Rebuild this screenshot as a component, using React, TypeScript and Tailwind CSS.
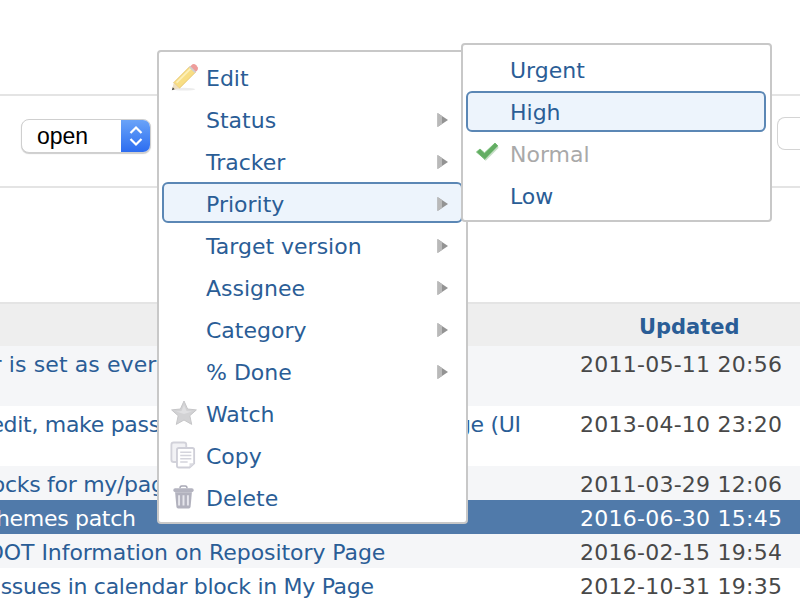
const font = "font-['DejaVu_Sans','Verdana',sans-serif]";

function PencilIcon() {
  return (
    <svg width="30" height="30" viewBox="0 0 32 32" className="blur-[0.4px]">
      <ellipse cx="15" cy="29" rx="12" ry="1.5" fill="#ececec" />
      <path d="M4 22 L21 5 L27 11 L10 28 Z" fill="#f8de84" stroke="#e8c468" strokeWidth="1" />
      <path d="M7 22 L22 7" stroke="#fcf0b8" strokeWidth="2" />
      <path d="M21 5 L24 2.5 Q26 1.5 28 3.5 L29.5 5.5 Q30.5 7.5 29 9 L27 11 Z" fill="#ee9d9b" />
      <path d="M21 5 L27 11" stroke="#cfcfcf" strokeWidth="2" />
      <path d="M4 22 L10 28 L2 30 Z" fill="#efe0c0" />
      <path d="M3 27 L5 29 L2 30 Z" fill="#444" />
    </svg>
  );
}

function StarIcon() {
  return (
    <svg width="28" height="28" viewBox="0 0 28 28" className="mr-[2px] blur-[0.5px]">
      <path
        d="M14 2 L17.6 10 L26.4 10.9 L19.8 16.7 L21.7 25.4 L14 21 L6.3 25.4 L8.2 16.7 L1.6 10.9 L10.4 10 Z"
        fill="#d2d2d4"
        stroke="#c6c6c8"
        strokeWidth="1"
        strokeLinejoin="round"
      />
      <path d="M14 6 L16.5 12 L22 12.6 L14 15 L6 12.6 L11.5 12 Z" fill="#e0e0e2" />
    </svg>
  );
}

function CopyIcon() {
  return (
    <svg width="26" height="28" viewBox="0 0 28 30" fill="none" className="mr-[4px] blur-[0.4px]">
      <rect x="1.5" y="1.5" width="16" height="21" rx="2.5" fill="#f2f2f5" stroke="#d2d2da" strokeWidth="2" />
      <path d="M9.5 7.5 H24 Q26 7.5 26 9.5 V24 L21 28.5 H9.5 Q7.5 28.5 7.5 26.5 V9.5 Q7.5 7.5 9.5 7.5 Z" fill="#fff" stroke="#cfcfd8" strokeWidth="2" />
      <path d="M11 12 H23 M11 15.5 H23 M11 19 H23 M11 22.5 H19" stroke="#d4d4dc" strokeWidth="1.6" />
      <path d="M26 24 H21 V28.5 Z" fill="#dcdce2" />
    </svg>
  );
}

function TrashIcon() {
  return (
    <svg width="23" height="26" viewBox="0 0 26 28" fill="none" className="mr-[4px] blur-[0.4px]">
      <path d="M9 4 Q9 1.5 11 1.5 H15 Q17 1.5 17 4" stroke="#a9a9b6" strokeWidth="1.6" />
      <rect x="1.5" y="4" width="23" height="4.5" rx="2" fill="#b4b4c0" />
      <path d="M3.5 8.5 H22.5 L21 25 Q20.8 27 19 27 H7 Q5.2 27 5 25 Z" fill="#b2b2be" />
      <path d="M8 12 V23.5 M13 12 V23.5 M18 12 V23.5" stroke="#e6e6ec" strokeWidth="2.2" />
    </svg>
  );
}

function CheckIcon() {
  return (
    <svg width="24" height="22" viewBox="0 0 24 22" className="mr-[5px] mb-[3px] blur-[0.3px]">
      <path d="M1.5 11 L5 8 L9.5 12 L20 2 L23 5 L10 18.5 Z" fill="#63ad63" stroke="#76bd76" strokeWidth="1" strokeLinejoin="round" />
      <path d="M10 18.5 L23 5 L23.5 7 L10.5 20 Z" fill="#c5ddc5" />
    </svg>
  );
}

function Arrow() {
  return (
    <svg width="13" height="16" viewBox="0 0 13 16" className="mr-[12px] mt-[3px] blur-[0.3px]">
      <path d="M1.5 1 L12 8 L1.5 15 Z" fill="#939393" />
      <path d="M1.5 1 L6 4 L6 12 L1.5 15 Z" fill="#b9b9b9" />
    </svg>
  );
}

function MenuItem({
  label,
  icon,
  sub,
  active,
  disabled,
  raised,
}: {
  label: string;
  icon?: React.ReactNode;
  sub?: boolean;
  active?: boolean;
  disabled?: boolean;
  raised?: boolean;
}) {
  return (
    <div
      className={`flex items-center h-[41px] mb-[1px] rounded-[6px] border-2 ${
        active ? 'border-[#5b87b5] bg-[#edf4fc]' : 'border-transparent'
      } ${disabled ? 'text-[#a9a9a9]' : 'text-[#2a5d96]'}`}
    >
      <div className="w-[42px] shrink-0 flex items-center justify-center">{icon}</div>
      <span className={`flex-1 ${raised ? 'pt-[2px]' : 'pt-[4px]'}`}>{label}</span>
      {sub && <Arrow />}
    </div>
  );
}

type Row = { title: string; date: string; height: string; shift: string; bg: string; selected?: boolean };

const rows: Row[] = [
  { title: 'Assignee filter is set as every member', date: '2011-05-11 20:56', height: 'h-[60px]', shift: 'tracking-[0.1px] -ml-[157px]', bg: 'bg-[#f5f6f8]' },
  { title: 'Bulk edit, make password fields optional on a page (UI', date: '2013-04-10 23:20', height: 'h-[60px]', shift: 'tracking-[-0.3px] -ml-[63px]', bg: 'bg-white' },
  { title: 'Add blocks for my/page layout', date: '2011-03-29 12:06', height: 'h-[34px]', shift: 'tracking-[-0.3px] -ml-[76px]', bg: 'bg-[#f5f6f8]' },
  { title: 'Update themes patch', date: '2016-06-30 15:45', height: 'h-[34px]', shift: 'tracking-[-0.3px] -ml-[97px]', bg: 'bg-[#507aaa]', selected: true },
  { title: 'Show DOT Information on Repository Page', date: '2016-02-15 19:54', height: 'h-[34px]', shift: 'tracking-[-0.07px] -ml-[79px]', bg: 'bg-[#f5f6f8]' },
  { title: 'Show issues in calendar block in My Page', date: '2012-10-31 19:35', height: 'h-[34px]', shift: 'tracking-[-0.3px] -ml-[70px]', bg: 'bg-white' },
];

export default function App() {
  return (
    <div className={`relative w-[800px] h-[600px] overflow-hidden bg-white text-[22px] leading-[30px] ${font}`}>
      <div className="h-[94px]" />

      {/* filter bar */}
      <div className="h-[94px] border-y-2 border-[#e4e4e4] flex items-center justify-between pl-[21px]">
        <div className="flex h-[34px] w-[130px] mb-[10px] rounded-[8px] border border-[#cfcfcf] shadow-[0_1px_1px_#ccc] overflow-hidden bg-white">
          <span className="flex-1 pl-[15px] text-black text-[23px] leading-[32px] font-['Liberation_Sans',sans-serif]">open</span>
          <div className="w-[29px] bg-gradient-to-b from-[#6aa3f8] to-[#2c6cf0] flex items-center justify-center">
            <svg width="16" height="24" viewBox="0 0 16 24" fill="none" stroke="white" strokeWidth="2.2">
              <path d="M2.5 9 L8 3.5 L13.5 9" />
              <path d="M2.5 15 L8 20.5 L13.5 15" />
            </svg>
          </div>
        </div>
        <div className="w-[23px] h-[33px] mb-[15px] rounded-l-[8px] border border-r-0 border-[#d4d4d4] bg-white" />
      </div>

      <div className="h-[114px]" />

      {/* issue table */}
      <div className="border-t-2 border-[#e4e4e4] bg-[#eeeeee] h-[44px] flex items-center justify-end">
        <span className="w-[220px] pl-[59px] pt-[4px] font-bold text-[#2a5d96] text-[21px]">Updated</span>
      </div>
      {rows.map((row) => (
        <div key={row.date} className={`flex items-start pt-[4px] ${row.height} ${row.bg} ${row.selected ? 'text-white' : ''}`}>
          <div className="w-[580px] overflow-hidden whitespace-nowrap">
            <span className={`block ${row.shift} ${row.selected ? '' : 'text-[#2a5d96]'}`}>{row.title}</span>
          </div>
          <span className={`whitespace-nowrap tracking-[0.25px] ${row.selected ? '' : 'text-[#484848]'}`}>{row.date}</span>
        </div>
      ))}

      {/* context menu */}
      <div className="absolute left-[157px] top-[50px] w-[311px] h-[474px] rounded-[4px] border-2 border-[#c8c8c8] bg-white pt-[4px] px-[3px]">
        <MenuItem label="Edit" icon={<PencilIcon />} />
        <MenuItem label="Status" sub />
        <MenuItem label="Tracker" sub />
        <MenuItem label="Priority" sub active />
        <MenuItem label="Target version" sub />
        <MenuItem label="Assignee" sub />
        <MenuItem label="Category" sub />
        <MenuItem label="% Done" sub />
        <MenuItem label="Watch" icon={<StarIcon />} />
        <MenuItem label="Copy" icon={<CopyIcon />} />
        <MenuItem label="Delete" icon={<TrashIcon />} />
      </div>

      {/* priority submenu */}
      <div className="absolute left-[461px] top-[43px] w-[311px] h-[179px] rounded-[4px] border-2 border-[#c8c8c8] bg-white pt-[4px] pl-[3px] pr-[4px]">
        <MenuItem label="Urgent" raised />
        <MenuItem label="High" active raised />
        <MenuItem label="Normal" icon={<CheckIcon />} disabled raised />
        <MenuItem label="Low" raised />
      </div>
    </div>
  );
}
